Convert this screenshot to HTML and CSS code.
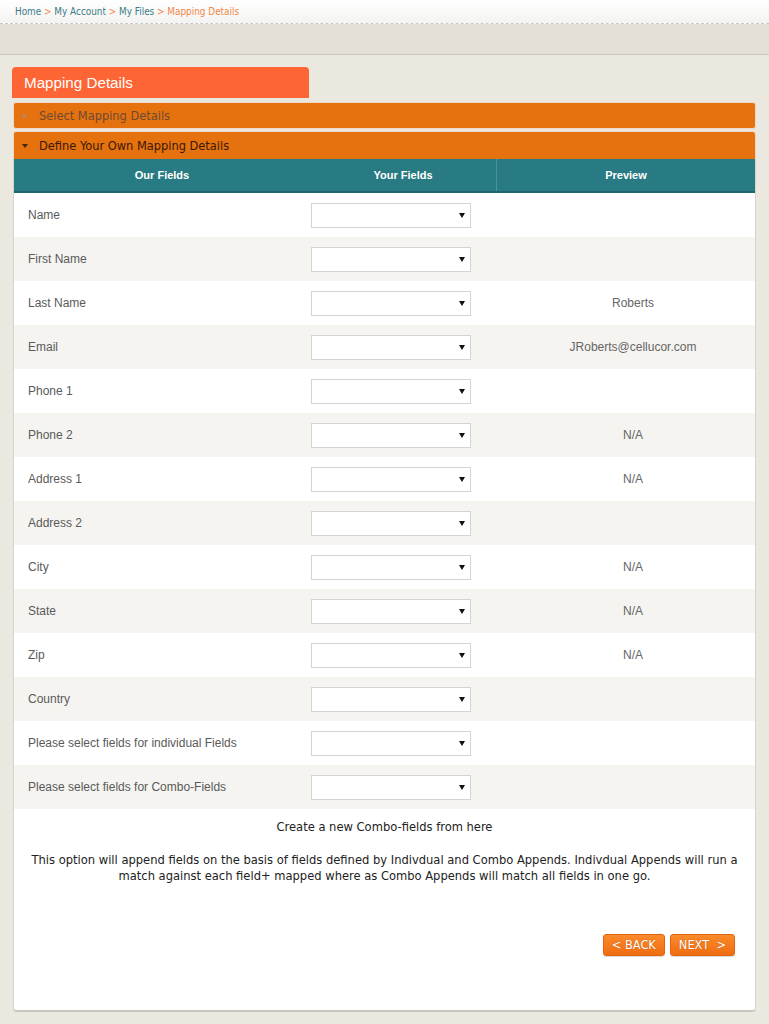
FILE: index.html
```html
<!DOCTYPE html>
<html>
<head>
<meta charset="utf-8">
<link rel="stylesheet" href="styles.css">
</head>
<body>
<div class="topbar">
  <div class="crumbs"><a>Home</a> <span class="sep">&gt;</span> <a>My Account</a> <span class="sep">&gt;</span> <a>My Files</a> <span class="sep">&gt;</span> <span class="cur">Mapping Details</span></div>
</div>
<div class="band"></div>
<div class="main">
  <div class="tab">Mapping Details</div>
  <div class="acc acc-closed"><span class="arr-r"></span>Select Mapping Details</div>
  <div class="acc acc-open"><span class="arr-d"></span>Define Your Own Mapping Details</div>
  <div class="panel">
    <div class="thead">
      <div class="th">Our Fields</div>
      <div class="th">Your Fields</div>
      <div class="th th-prev">Preview</div>
    </div>
    <div class="row"><div class="lbl">Name</div><div class="sel"><span class="caret"></span></div><div class="prev"></div></div>
    <div class="row alt"><div class="lbl">First Name</div><div class="sel"><span class="caret"></span></div><div class="prev"></div></div>
    <div class="row"><div class="lbl">Last Name</div><div class="sel"><span class="caret"></span></div><div class="prev">Roberts</div></div>
    <div class="row alt"><div class="lbl">Email</div><div class="sel"><span class="caret"></span></div><div class="prev">JRoberts@cellucor.com</div></div>
    <div class="row"><div class="lbl">Phone 1</div><div class="sel"><span class="caret"></span></div><div class="prev"></div></div>
    <div class="row alt"><div class="lbl">Phone 2</div><div class="sel"><span class="caret"></span></div><div class="prev">N/A</div></div>
    <div class="row"><div class="lbl">Address 1</div><div class="sel"><span class="caret"></span></div><div class="prev">N/A</div></div>
    <div class="row alt"><div class="lbl">Address 2</div><div class="sel"><span class="caret"></span></div><div class="prev"></div></div>
    <div class="row"><div class="lbl">City</div><div class="sel"><span class="caret"></span></div><div class="prev">N/A</div></div>
    <div class="row alt"><div class="lbl">State</div><div class="sel"><span class="caret"></span></div><div class="prev">N/A</div></div>
    <div class="row"><div class="lbl">Zip</div><div class="sel"><span class="caret"></span></div><div class="prev">N/A</div></div>
    <div class="row alt"><div class="lbl">Country</div><div class="sel"><span class="caret"></span></div><div class="prev"></div></div>
    <div class="row"><div class="lbl">Please select fields for individual Fields</div><div class="sel"><span class="caret"></span></div><div class="prev"></div></div>
    <div class="row alt"><div class="lbl">Please select fields for Combo-Fields</div><div class="sel"><span class="caret"></span></div><div class="prev"></div></div>
    <div class="combo">Create a new Combo-fields from here</div>
    <p class="note">This option will append fields on the basis of fields defined by Indivdual and Combo Appends. Indivdual Appends will run a match against each field+ mapped where as Combo Appends will match all fields in one go.</p>
    <div class="btns">
      <button class="btn">&lt; BACK</button>
      <button class="btn">NEXT &nbsp;&gt;</button>
    </div>
  </div>
</div>
</body>
</html>
```

FILE: styles.css
```css
html, body {
  margin: 0;
  padding: 0;
}
body {
  background: #ebe8df;
  font-family: "Liberation Sans", Arial, sans-serif;
  height: 1024px;
  overflow: hidden;
}
.topbar {
  height: 23px;
  background: linear-gradient(#ffffff, #f3f3f1);
  border-bottom: 1px dashed #c8c8c8;
}
.crumbs {
  padding-left: 15px;
  font-family: "DejaVu Sans Condensed", "DejaVu Sans", sans-serif;
  font-size: 9.9px;
  line-height: 23px;
  color: #3b7a86;
}
.crumbs .sep, .crumbs .cur {
  color: #f0874a;
}
.band {
  height: 30px;
  background: #e4e0d6;
  border-bottom: 1px solid #cbc7bc;
}
.main {
  padding: 12px 0 0 12px;
}
.tab {
  width: 285px;
  height: 31px;
  padding-left: 12px;
  background: #fe6535;
  border-radius: 4px 4px 0 0;
  color: #fff;
  font-size: 15.2px;
  line-height: 31px;
  margin-bottom: 4px;
}
.acc {
  margin-left: 1px;
  width: 741px;
  height: 25px;
  border: 1px solid #efd9c6;
  border-radius: 3px;
  background: #e5720f;
  font-family: "DejaVu Sans Condensed", "DejaVu Sans", sans-serif;
  font-size: 12.7px;
  line-height: 25px;
  display: flex;
  align-items: center;
}
.acc-closed {
  color: #6e4a33;
  margin-bottom: 2px;
}
.acc-open {
  color: #3a1806;
  border-radius: 3px 3px 0 0;
  border-bottom: none;
  height: 27px;
}
.arr-r {
  width: 0;
  height: 0;
  border-left: 4px solid #b88660;
  border-top: 3px solid transparent;
  border-bottom: 3px solid transparent;
  margin: 0 12px 0 9px;
}
.arr-d {
  width: 0;
  height: 0;
  border-top: 4px solid #4a2410;
  border-left: 3px solid transparent;
  border-right: 3px solid transparent;
  margin: 0 11px 0 8px;
}
.panel {
  margin-left: 1px;
  width: 741px;
  background: #fff;
  border-left: 1px solid #d6d3cb;
  border-right: 1px solid #d6d3cb;
  border-bottom: 2px solid #c9c6bf;
  border-radius: 0 0 4px 4px;
  padding-bottom: 54px;
}
.thead {
  display: grid;
  grid-template-columns: 296px 186px 1fr;
  height: 32px;
  background: #287b82;
  border-bottom: 2px solid #1f666c;
}
.th {
  color: #fff;
  font-size: 11px;
  font-weight: bold;
  text-align: center;
  line-height: 32px;
}
.th-prev {
  border-left: 1px solid #4a9398;
}
.row {
  display: grid;
  grid-template-columns: 296px 186px 1fr;
  height: 44px;
  align-items: center;
  background: #fff;
}
.row.alt {
  background: #f5f4f0;
}
.lbl {
  padding-left: 14px;
  font-size: 12px;
  color: #5a5a5a;
}
.sel {
  width: 158px;
  height: 23px;
  margin-left: 1px;
  border: 1px solid #d4d4d4;
  background: #fff;
  position: relative;
}
.caret {
  position: absolute;
  right: 5px;
  top: 9px;
  width: 0;
  height: 0;
  border-top: 5px solid #111;
  border-left: 3px solid transparent;
  border-right: 3px solid transparent;
}
.prev {
  text-align: center;
  padding-left: 15px;
  font-size: 12px;
  color: #666;
}
.combo {
  text-align: center;
  font-family: "DejaVu Sans Condensed", "DejaVu Sans", sans-serif;
  font-size: 12.8px;
  line-height: 16px;
  color: #222;
  padding-top: 10px;
}
.note {
  margin: 17px 0 0;
  padding: 0 10px;
  text-align: center;
  font-family: "DejaVu Sans Condensed", "DejaVu Sans", sans-serif;
  font-size: 12.8px;
  line-height: 16px;
  color: #222;
}
.btns {
  display: flex;
  justify-content: flex-end;
  gap: 5px;
  padding-right: 20px;
  margin-top: 50px;
}
.btn {
  height: 22px;
  padding: 0 8px;
  border: 1px solid #e06410;
  border-radius: 3px;
  background: linear-gradient(#fb8a2a, #ef6d12);
  color: #fff;
  font-family: "DejaVu Sans Condensed", "DejaVu Sans", sans-serif;
  font-size: 12.7px;
  line-height: 20px;
  text-shadow: 0 0 1px rgba(120, 40, 0, 0.5);
  box-shadow: 0 1px 1px rgba(0,0,0,0.15);
}
```
